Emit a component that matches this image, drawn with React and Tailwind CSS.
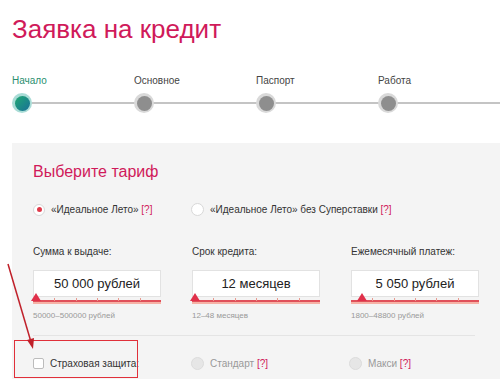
import React from "react";

const font = { fontFamily: '"Liberation Sans", Arial, sans-serif' };

function Step({ label, active }) {
  return (
    <div className="flex flex-col items-start w-[122px] shrink-0">
      <div className={`text-[10px] leading-[14px] ${active ? "text-[#2a8f6f]" : "text-[#444]"}`}>{label}</div>
      <div className="mt-[5px] h-[20px] flex items-center">
        <div className={`w-[20px] h-[20px] rounded-full flex items-center justify-center ${active ? "bg-[#a9dcd6]" : "bg-[#d9d9d9]"}`}>
          <div className={`w-[15px] h-[15px] rounded-full ${active ? "bg-gradient-to-br from-[#23a86f] to-[#1c6f96]" : "bg-[#8e8e8e]"}`} />
        </div>
      </div>
    </div>
  );
}

function Slider({ label, value, range, pos }) {
  return (
    <div className="w-[128px] shrink-0 flex flex-col">
      <div className="text-[10px] text-[#333] leading-[14px]">{label}</div>
      <div className="mt-[11px] h-[27px] bg-white border border-[#e2e2e2] flex items-center justify-center text-[13px] text-[#222]">{value}</div>
      <div className="relative h-[8px]">
        <div className="absolute left-0 right-0 top-[3px] h-[2px] bg-[#e0505a]" />
        <div className="absolute left-0 right-0 top-[5px] h-[2px] bg-[#f6b2a6]" />
        {[1, 2, 3, 4, 5].map((i) => (
          <div key={i} className="absolute top-[1px] w-px h-[3px] bg-[#e89a8f]" style={{ left: `${(i * 100) / 6}%` }} />
        ))}
        <div
          className="absolute top-[-4px] w-0 h-0 border-l-[5px] border-r-[5px] border-b-[8px] border-l-transparent border-r-transparent border-b-[#e0304a]"
          style={{ left: pos }}
        />
      </div>
      <div className="mt-[6px] text-[8px] text-[#999] leading-[10px]">{range}</div>
    </div>
  );
}

export default function App() {
  return (
    <div className="w-[500px] h-[379px] bg-white overflow-hidden relative" style={font}>
      <div className="pl-[12px] pt-[12px]">
        <h1 className="text-[26px] leading-[34px] text-[#d01a5a] font-normal">Заявка на кредит</h1>
        <div className="relative mt-[28px]">
          <div className="absolute left-[20px] right-0 top-[28px] h-[2px] bg-[#c4c4c4]" />
          <div className="flex relative">
            <Step label="Начало" active />
            <Step label="Основное" />
            <Step label="Паспорт" />
            <Step label="Работа" />
          </div>
        </div>
        <div className="mt-[30px] bg-[#f4f4f4] h-[240px] pl-[21px] pt-[19px]">
          <div className="text-[16px] leading-[20px] text-[#d01a5a]">Выберите тариф</div>
          <div className="flex items-center mt-[20px] text-[10px] text-[#333]">
            <div className="flex items-center w-[158px]">
              <div className="w-[12px] h-[12px] rounded-full bg-white border border-[#d8d8d8] flex items-center justify-center">
                <div className="w-[5px] h-[5px] rounded-full bg-[#e03a4a]" />
              </div>
              <span className="ml-[6px]">«Идеальное Лето» <span className="text-[#d01a5a]">[?]</span></span>
            </div>
            <div className="flex items-center">
              <div className="w-[13px] h-[13px] rounded-full bg-white border border-[#d8d8d8]" />
              <span className="ml-[6px]">«Идеальное Лето» без Суперставки <span className="text-[#d01a5a]">[?]</span></span>
            </div>
          </div>
          <div className="flex gap-[31px] mt-[28px]">
            <Slider label="Сумма к выдаче:" value="50 000 рублей" range="50000–500000 рублей" pos="-2px" />
            <Slider label="Срок кредита:" value="12 месяцев" range="12–48 месяцев" pos="-2px" />
            <Slider label="Ежемесячный платеж:" value="5 050 рублей" range="1800–48800 рублей" pos="6px" />
          </div>
          <div className="mt-[14px] mr-[25px] h-px bg-[#e4e4e4]" />
          <div className="flex items-center mt-[20px] text-[10px]">
            <div className="flex items-center w-[158px]">
              <div className="w-[11px] h-[11px] rounded-[2px] bg-white border border-[#bcbcbc]" />
              <span className="ml-[6px] text-[#333]">Страховая защита:</span>
            </div>
            <div className="flex items-center w-[158px]">
              <div className="w-[13px] h-[13px] rounded-full bg-[#e6e6e6] border border-[#dcdcdc]" />
              <span className="ml-[6px] text-[#999]">Стандарт <span className="text-[#d01a5a]">[?]</span></span>
            </div>
            <div className="flex items-center">
              <div className="w-[13px] h-[13px] rounded-full bg-[#e6e6e6] border border-[#dcdcdc]" />
              <span className="ml-[6px] text-[#999]">Макси <span className="text-[#d01a5a]">[?]</span></span>
            </div>
          </div>
        </div>
      </div>
      <div className="absolute left-[14px] top-[340px] w-[124px] h-[38px] border border-[#e0303a]" />
      <svg className="absolute left-0 top-0" width="500" height="379" viewBox="0 0 500 379">
        <line x1="8" y1="264" x2="31" y2="342" stroke="#c0202a" strokeWidth="1.5" />
        <polygon points="33,349 27,340 34,338" fill="#c0202a" />
      </svg>
    </div>
  );
}
